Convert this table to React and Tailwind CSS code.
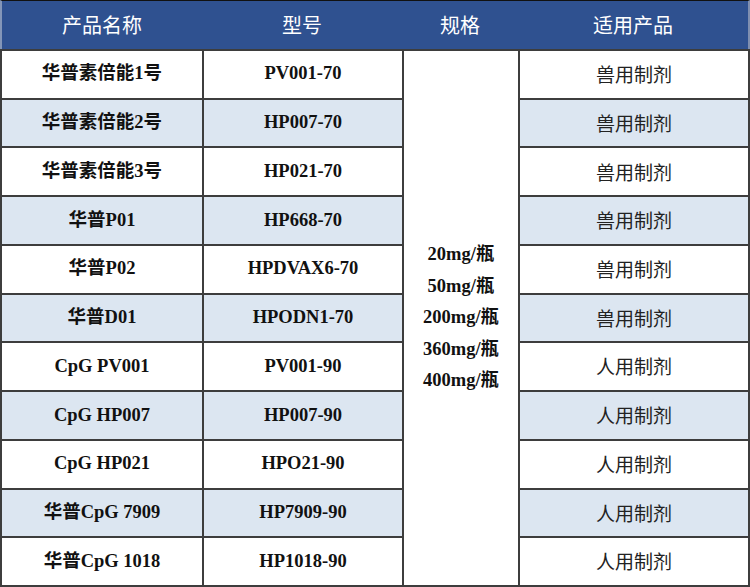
import React from 'react';

const rows = [
  { name: '华普素倍能1号', model: 'PV001-70', use: '兽用制剂' },
  { name: '华普素倍能2号', model: 'HP007-70', use: '兽用制剂' },
  { name: '华普素倍能3号', model: 'HP021-70', use: '兽用制剂' },
  { name: '华普P01', model: 'HP668-70', use: '兽用制剂' },
  { name: '华普P02', model: 'HPDVAX6-70', use: '兽用制剂' },
  { name: '华普D01', model: 'HPODN1-70', use: '兽用制剂' },
  { name: 'CpG PV001', model: 'PV001-90', use: '人用制剂' },
  { name: 'CpG HP007', model: 'HP007-90', use: '人用制剂' },
  { name: 'CpG HP021', model: 'HPO21-90', use: '人用制剂' },
  { name: '华普CpG 7909', model: 'HP7909-90', use: '人用制剂' },
  { name: '华普CpG 1018', model: 'HP1018-90', use: '人用制剂' },
];

const specs = ['20mg/瓶', '50mg/瓶', '200mg/瓶', '360mg/瓶', '400mg/瓶'];

const serif = "font-['Liberation_Serif','Noto_Sans_CJK_SC',serif] font-bold text-[18.5px] text-[#111]";
const sans = "font-['Noto_Sans_CJK_SC',sans-serif] text-[19px] text-[#222]";

export default function App() {
  return (
    <div className="w-[750px] h-[587px] bg-white overflow-hidden">
      {/* Header */}
      <div className="h-[49px] flex bg-[#2f5190] border-t-[1px] border-t-[#111] border-l-[2px] border-l-[#8496b8] border-r-[2px] border-r-[#7f8fb0] text-white font-['Noto_Sans_CJK_SC',sans-serif] text-[20px]">
        <div className="w-[200px] flex items-center justify-center">产品名称</div>
        <div className="w-[200px] flex items-center justify-center">型号</div>
        <div className="w-[116px] flex items-center justify-center">规格</div>
        <div className="flex-1 flex items-center justify-center">适用产品</div>
      </div>

      {/* Body */}
      <div className="h-[538px] grid grid-cols-[202px_200px_116px_1fr] grid-rows-[repeat(11,1fr)] border-t-[2px] border-l-[2px] border-[#3d3d3d]">
        {rows.map((r, i) => {
          const bg = i % 2 === 1 ? 'bg-[#dce6f1]' : 'bg-white';
          return (
            <React.Fragment key={i}>
              <div
                style={{ gridRow: i + 1, gridColumn: 1 }}
                className={`${bg} ${serif} flex items-center justify-center border-r-[2px] border-b-[2px] border-[#3d3d3d]`}
              >
                {r.name}
              </div>
              <div
                style={{ gridRow: i + 1, gridColumn: 2 }}
                className={`${bg} ${serif} flex items-center justify-center border-r-[2px] border-b-[2px] border-[#3d3d3d]`}
              >
                {r.model}
              </div>
              <div
                style={{ gridRow: i + 1, gridColumn: 4 }}
                className={`${bg} ${sans} flex items-center justify-center border-r-[2px] border-b-[2px] border-[#3d3d3d]`}
              >
                {r.use}
              </div>
            </React.Fragment>
          );
        })}
        <div className={`col-start-3 row-start-1 row-span-11 bg-white ${serif} flex flex-col items-center justify-center border-r-[2px] border-b-[2px] border-[#3d3d3d] leading-[31.6px]`}>
          {specs.map((s) => (
            <div key={s}>{s}</div>
          ))}
        </div>
      </div>
    </div>
  );
}
